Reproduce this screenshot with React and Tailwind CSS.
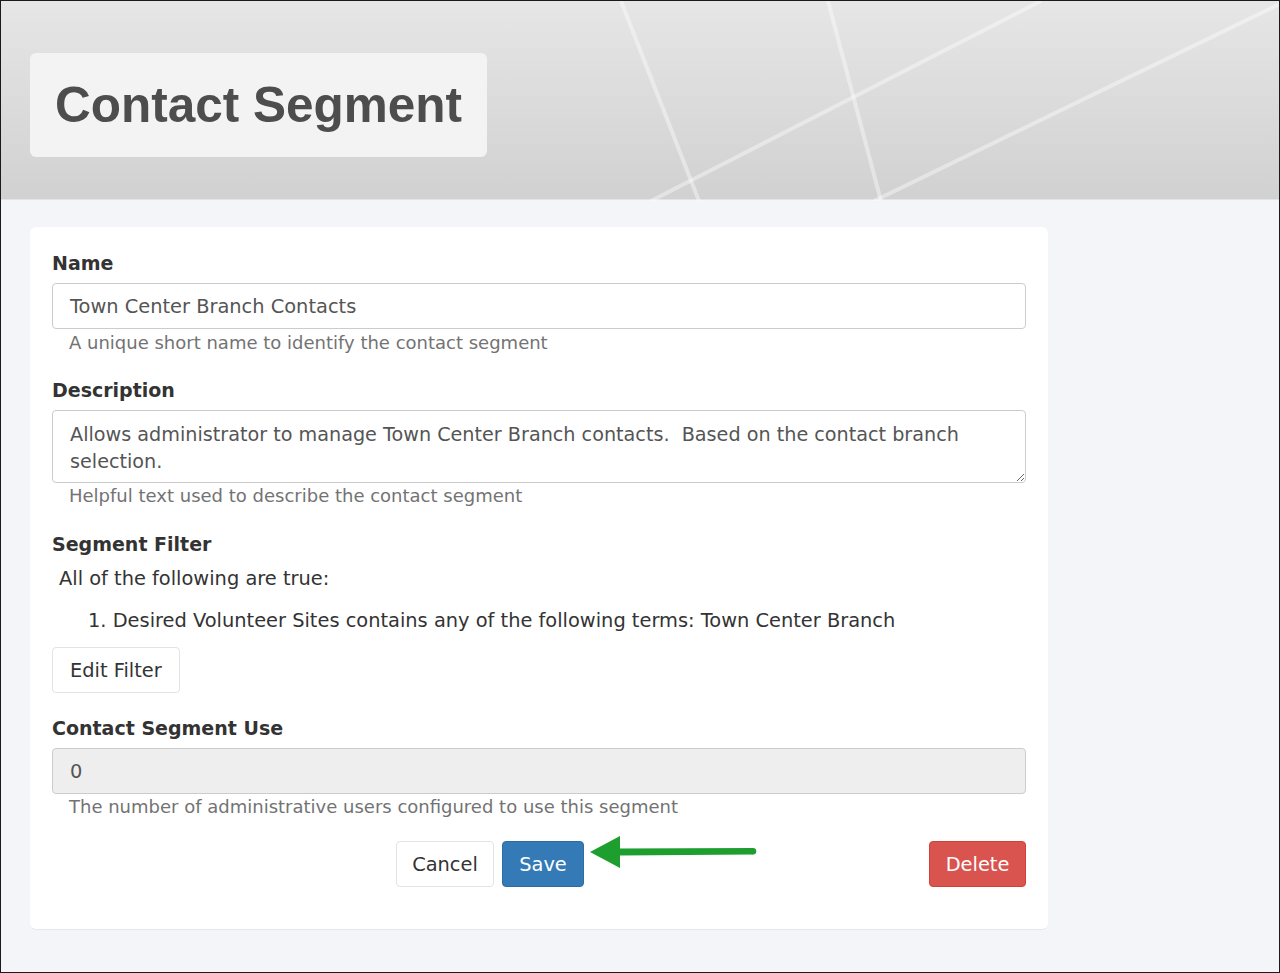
import React from "react";

const Label = ({ children, className = "" }) => (
  <div className={`text-[19px] leading-[24px] font-bold text-[#333] ${className}`}>{children}</div>
);

const Help = ({ children, className = "" }) => (
  <div className={`pl-[17px] text-[18px] leading-[20px] text-[#737373] ${className}`}>{children}</div>
);

const HeaderLines = () => (
  <svg className="absolute inset-0" width="1280" height="200" viewBox="0 0 1280 200">
    <g stroke="#ffffff" strokeOpacity="0.4" strokeWidth="4" fill="none">
      <line x1="620" y1="0" x2="698" y2="200" />
      <line x1="827" y1="0" x2="880" y2="200" />
      <line x1="1040" y1="0" x2="650" y2="200" />
      <line x1="1285" y1="0" x2="873" y2="200" />
    </g>
  </svg>
);

export default function App() {
  return (
    <div
      className="relative w-[1280px] h-[973px] overflow-hidden border border-[#1a1a1a] bg-[#f4f5f9]"
      style={{ fontFamily: '"DejaVu Sans", Verdana, sans-serif' }}
    >
      {/* Header */}
      <div className="relative h-[199px] bg-gradient-to-b from-[#e6e6e6] to-[#d1d1d1] border-b border-[#dfe3ea] pt-[52px] pl-[29px]">
        <HeaderLines />
        <div className="relative w-[457px] h-[104px] bg-[#f3f3f3] rounded-md flex items-center pl-[25px]">
          <h1
            className="text-[49.5px] font-bold text-[#4d4d4d] leading-none"
            style={{ fontFamily: '"Liberation Sans", Arial, sans-serif' }}
          >
            Contact Segment
          </h1>
        </div>
      </div>

      {/* Body */}
      <div className="pt-[27px] pl-[29px]">
        <div className="relative w-[1018px] bg-white rounded-md border-b border-[#e6e7ea] px-[22px] pt-[24px] pb-[42px]">
          <Label>Name</Label>
          <div className="mt-[8px] h-[46px] border border-[#cccccc] rounded-[4px] flex items-center px-[17px] pt-[2px] text-[19.4px] text-[#555]">
            Town Center Branch Contacts
          </div>
          <Help className="mt-[4px]">A unique short name to identify the contact segment</Help>

          <Label className="mt-[25px]">Description</Label>
          <textarea
            readOnly
            value={"Allows administrator to manage Town Center Branch contacts.  Based on the contact branch selection."}
            className="mt-[8px] block w-full h-[73px] border border-[#cccccc] rounded-[4px] px-[17px] pt-[10px] text-[19.2px] leading-[27px] text-[#555] resize-y outline-none"
            style={{ fontFamily: '"DejaVu Sans", Verdana, sans-serif' }}
          />
          <Help className="mt-[3px]">Helpful text used to describe the contact segment</Help>

          <Label className="mt-[26px]">Segment Filter</Label>
          <div className="mt-[11px] pl-[7px] text-[19.4px] leading-[24px] text-[#333]">All of the following are true:</div>
          <div className="mt-[18px] pl-[36px] text-[19.4px] leading-[24px] text-[#333]">
            1. Desired Volunteer Sites contains any of the following terms: Town Center Branch
          </div>
          <button className="mt-[14px] h-[46px] px-[17px] pt-[2px] border border-[#e3e3e3] rounded-[4px] bg-white text-[19.4px] text-[#333]">
            Edit Filter
          </button>

          <Label className="mt-[23px]">Contact Segment Use</Label>
          <div className="mt-[8px] h-[46px] border border-[#cccccc] rounded-[4px] bg-[#eeeeee] flex items-center px-[17px] pt-[2px] text-[19.4px] text-[#555]">
            0
          </div>
          <Help className="mt-[3px]">The number of administrative users configured to use this segment</Help>

          <div className="mt-[24px] flex items-center">
            <div className="flex items-center gap-[8px] pl-[344px]">
              <button className="h-[46px] w-[98px] pt-[2px] border border-[#e3e3e3] rounded-[4px] bg-white text-[19.4px] text-[#333]">
                Cancel
              </button>
              <button className="h-[46px] w-[82px] pt-[2px] border border-[#2e6da4] rounded-[4px] bg-[#337ab7] text-[19.4px] text-white">
                Save
              </button>
            </div>
            <button className="ml-auto h-[46px] w-[97px] pt-[2px] border border-[#d43f3a] rounded-[4px] bg-[#d9534f] text-[19.4px] text-white">
              Delete
            </button>
          </div>

          {/* annotation arrow */}
          <svg className="absolute left-[559px] top-[606px]" width="170" height="38" viewBox="0 0 170 38">
            <path d="M30 15.5 L164 15 L164 21.5 L30 22.5 Z" fill="#1e9e2e" />
            <circle cx="164" cy="18.25" r="3.25" fill="#1e9e2e" />
            <path d="M1 19 L31 3 L31 35 Z" fill="#1e9e2e" />
          </svg>
        </div>
      </div>
    </div>
  );
}
